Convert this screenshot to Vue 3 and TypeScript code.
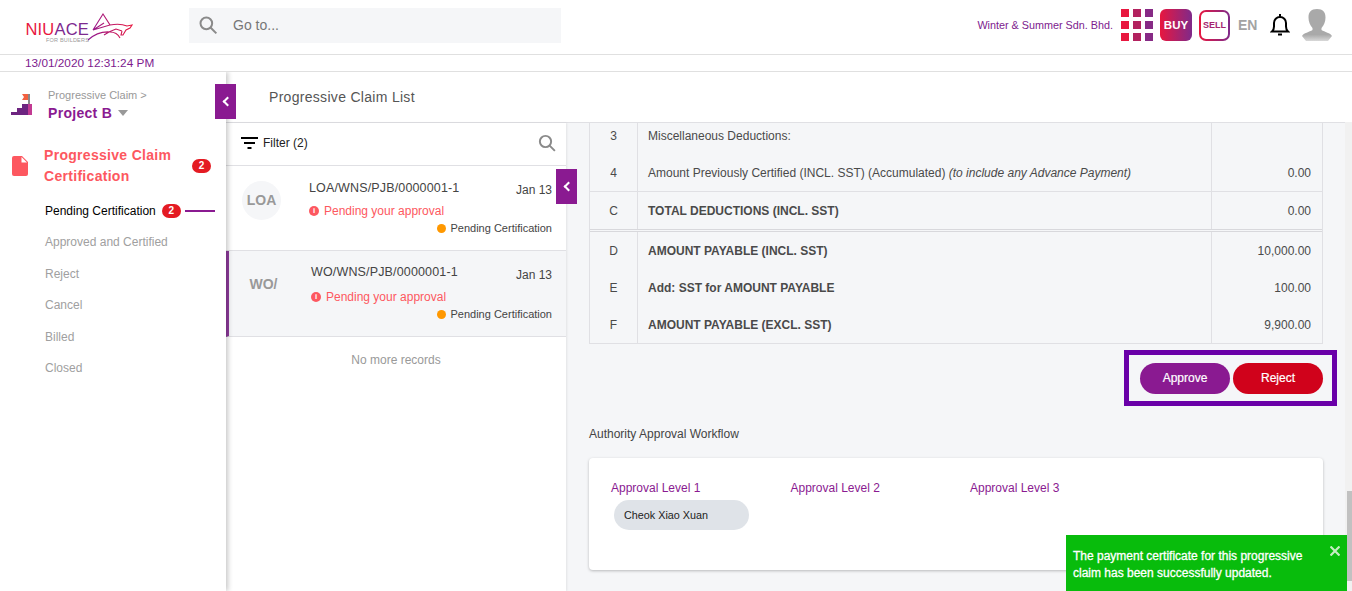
<script setup lang="ts">
interface ClaimCard {
  avatar: string;
  ref: string;
  active: boolean;
}

interface TableRow {
  no: string;
  label: string;
  note?: string;
  amount: string;
  bold?: boolean;
  rule?: 'single' | 'double';
}

const menuItems = ['Approved and Certified', 'Reject', 'Cancel', 'Billed', 'Closed'];

const claims: ClaimCard[] = [
  { avatar: 'LOA', ref: 'LOA/WNS/PJB/0000001-1', active: false },
  { avatar: 'WO/', ref: 'WO/WNS/PJB/0000001-1', active: true },
];

const rows: TableRow[] = [
  { no: '3', label: 'Miscellaneous Deductions:', amount: '' },
  {
    no: '4',
    label: 'Amount Previously Certified (INCL. SST) (Accumulated) ',
    note: '(to include any Advance Payment)',
    amount: '0.00',
    rule: 'single',
  },
  { no: 'C', label: 'TOTAL DEDUCTIONS (INCL. SST)', amount: '0.00', bold: true, rule: 'double' },
  { no: 'D', label: 'AMOUNT PAYABLE (INCL. SST)', amount: '10,000.00', bold: true },
  { no: 'E', label: 'Add: SST for AMOUNT PAYABLE', amount: '100.00', bold: true },
  { no: 'F', label: 'AMOUNT PAYABLE (EXCL. SST)', amount: '9,900.00', bold: true },
];

const levels = ['Approval Level 1', 'Approval Level 2', 'Approval Level 3'];
</script>

<template>
  <div class="page">
    <header class="topbar">
      <div class="logo">
        <div class="logo-text">
          <span class="logo-name"><span class="logo-niu">NIU</span>ACE</span>
          <span class="logo-sub">FOR BUILDERS</span>
        </div>
        <svg class="logo-bull" width="44" height="30" viewBox="0 0 44 30" fill="none">
          <defs>
            <linearGradient id="bull" x1="0" y1="0" x2="1" y2="0">
              <stop offset="0" stop-color="#8e1a94" />
              <stop offset="1" stop-color="#e8173f" />
            </linearGradient>
          </defs>
          <path
            d="M3 18 L13 2 L20 13 L3 18 L14 11 M20 13 Q30 11 37 14 L42 13 L40 16 L36 18 L33 23 L31 23 L32 19 M-2 28 Q8 19 20 20 Q27 20 30 26 M14 23 Q20 19 26 17 L32 19"
            stroke="url(#bull)"
            stroke-width="1.100"
          />
        </svg>
      </div>
      <div class="search">
        <svg width="20" height="20" viewBox="0 0 24 24" fill="none" stroke="#8a8a8a" stroke-width="2.400">
          <circle cx="10" cy="10" r="7" />
          <path d="M15 15l7 7" />
        </svg>
        <span>Go to...</span>
      </div>
      <div class="top-right">
        <span class="company">Winter &amp; Summer Sdn. Bhd.</span>
        <div class="apps">
          <i v-for="n in 9" :key="n" :class="'c' + ((n - 1) % 3)"></i>
        </div>
        <div class="buy">BUY</div>
        <div class="sell"><div class="sell-in">SELL</div></div>
        <span class="lang">EN</span>
        <svg class="bell" width="20" height="24" viewBox="0 0 20 24" fill="none" stroke="#000" stroke-width="2">
          <path d="M2 18.500h16c-1.400-1.200-2-2.600-2-5V10c0-3.400-2.600-6-6-6S4 6.600 4 10v3.500c0 2.400-.6 3.800-2 5z" />
          <path d="M10 1v3" />
          <path d="M8 21.500h4" />
        </svg>
        <svg class="avatar-pic" width="30" height="32" viewBox="0 0 30 32">
          <defs>
            <linearGradient id="bust" x1="0" y1="0" x2="0" y2="1">
              <stop offset="0.8" stop-color="#a9a9a9" />
              <stop offset="1" stop-color="#d8d8d8" />
            </linearGradient>
          </defs>
          <path
            fill="url(#bust)"
            d="M15 0c6 0 8.500 3 8.500 8.500 0 4-1.500 8-4 10.500v2c3 2 9 3 10.500 6l-4 5H4l-4-5c1.500-3 7.500-4 10.500-6v-2C8 16.500 6.500 12.500 6.500 8.500 6.500 3 9 0 15 0z"
          />
        </svg>
      </div>
    </header>

    <div class="datebar">13/01/2020 12:31:24 PM</div>

    <div class="body">
      <aside class="sidebar">
        <div class="project">
          <svg width="21" height="23" viewBox="0 0 21 23">
            <path fill="#f2603f" d="M11 1h7v6h-7l2-3z" />
            <rect x="17" y="1" width="2" height="10" fill="#888" />
            <path fill="#6d2480" d="M0 22v-3h6v-4h5v-4h6v11z" />
            <rect x="17" y="11" width="4" height="11" fill="#c23a92" />
          </svg>
          <div>
            <div class="crumb">Progressive Claim &gt;</div>
            <div class="project-name">Project B <span class="caret"></span></div>
          </div>
        </div>
        <div class="group">
          <svg class="doc" width="16" height="20" viewBox="0 0 16 20">
            <path fill="#fd5860" d="M2 0h8l6 6v12a2 2 0 0 1-2 2H2a2 2 0 0 1-2-2V2a2 2 0 0 1 2-2z" />
            <path fill="#fff" d="M9.500 1v5.500H15z" />
          </svg>
          <div class="group-title">Progressive Claim Certification</div>
          <span class="badge">2</span>
        </div>
        <div class="menu-active">
          <span>Pending Certification</span>
          <span class="badge">2</span>
          <i class="dash"></i>
        </div>
        <div v-for="item in menuItems" :key="item" class="menu-item">{{ item }}</div>
      </aside>

      <main class="content">
        <div class="titlebar">Progressive Claim List</div>
        <div class="columns">
          <section class="list">
            <div class="filter">
              <svg width="18" height="13" viewBox="0 0 18 13">
                <path fill="#000" d="M0 0h17v2H0zM3 5h11v2H3zM6.500 10h4v2h-4z" />
              </svg>
              <span class="filter-label">Filter (2)</span>
              <svg class="filter-search" width="18" height="18" viewBox="0 0 24 24" fill="none" stroke="#8a8a8a" stroke-width="2.600">
                <circle cx="10" cy="10" r="7.500" />
                <path d="M15.500 15.500l7 7" />
              </svg>
            </div>
            <div v-for="claim in claims" :key="claim.ref" class="claim" :class="{ active: claim.active }">
              <div class="claim-avatar">{{ claim.avatar }}</div>
              <div class="claim-main">
                <div class="claim-top">
                  <span class="claim-ref">{{ claim.ref }}</span>
                  <span class="claim-date">Jan 13</span>
                </div>
                <div class="claim-warn"><b>i</b>Pending your approval</div>
                <div class="claim-status"><i></i>Pending Certification</div>
              </div>
            </div>
            <div class="no-more">No more records</div>
          </section>

          <section class="detail">
            <div class="table">
              <div
                v-for="row in rows"
                :key="row.no"
                class="row"
                :class="row.rule"
              >
                <div class="cell-no">{{ row.no }}</div>
                <div class="cell-label" :class="{ bold: row.bold }">{{ row.label }}<em v-if="row.note">{{ row.note }}</em></div>
                <div class="cell-amount">{{ row.amount }}</div>
              </div>
            </div>
            <div class="actions-wrap">
              <div class="actions">
                <button class="btn approve">Approve</button>
                <button class="btn reject">Reject</button>
              </div>
            </div>
            <h4 class="wf-title">Authority Approval Workflow</h4>
            <div class="wf-card">
              <div class="wf-levels">
                <div v-for="level in levels" :key="level" class="wf-level">{{ level }}</div>
              </div>
              <div class="chip">Cheok Xiao Xuan</div>
            </div>
          </section>
        </div>
      </main>

      <button class="collapse first"><span></span></button>
      <button class="collapse second"><span></span></button>
    </div>

    <div class="scroll-track"><div class="scroll-thumb"></div></div>

    <div class="toast">
      <span>The payment certificate for this progressive claim has been successfully updated.</span>
      <svg class="toast-x" width="10" height="10" viewBox="0 0 10 10" stroke="#c6edc2" stroke-width="2.200">
        <path d="M0.500 0.500l9 9M9.500 0.500l-9 9" />
      </svg>
    </div>
  </div>
</template>

<style scoped>
* {
  box-sizing: border-box;
}

.page {
  position: relative;
  width: 1352px;
  height: 591px;
  overflow: hidden;
  background: #fff;
  font-family: "Liberation Sans", Arial, sans-serif;
  font-size: 12px;
  color: #333;
  display: flex;
  flex-direction: column;
}

.topbar {
  height: 55px;
  flex: none;
  display: flex;
  align-items: center;
  border-bottom: 1px solid #e0e0e0;
}

.logo {
  width: 189px;
  flex: none;
  display: flex;
  padding-left: 25px;
  align-items: flex-start;
  height: 100%;
}

.logo-text {
  width: 64px;
  flex: none;
  display: flex;
  flex-direction: column;
  align-items: flex-end;
  padding-top: 21px;
}

.logo-name {
  font-size: 16.500px;
  line-height: 16px;
  letter-spacing: 0.2px;
  white-space: nowrap;
  color: #7d2a8f;
}

.logo-niu {
  color: #e8173f;
}

.logo-sub {
  font-size: 5.500px;
  line-height: 6px;
  letter-spacing: 0.2px;
  white-space: nowrap;
  color: #999;
}

.logo-bull {
  margin: 12px 0 0 1px;
  overflow: visible;
}

.search {
  width: 372px;
  height: 35px;
  margin-top: -4px;
  background: #f5f6f8;
  display: flex;
  align-items: center;
  gap: 15px;
  padding-left: 9px;
  font-size: 14px;
  color: #777;
}

.top-right {
  margin-left: auto;
  display: flex;
  align-items: center;
  padding-right: 20px;
  margin-top: -4px;
}

.company {
  font-size: 10.800px;
  color: #7d1b8e;
  margin-right: 8px;
}

.apps {
  display: grid;
  grid-template-columns: repeat(3, 8px);
  grid-auto-rows: 8px;
  gap: 4px;
  width: 32px;
}

.apps i.c0 {
  background: #e8173f;
}

.apps i.c1 {
  background: #b3225f;
}

.apps i.c2 {
  background: #872a85;
}

.buy {
  width: 32px;
  height: 32px;
  margin-left: 7px;
  border-radius: 6px;
  background: linear-gradient(90deg, #e8173f, #7f2a8a);
  color: #fff;
  font-weight: 700;
  font-size: 11.500px;
  display: flex;
  align-items: center;
  justify-content: center;
}

.sell {
  width: 31px;
  height: 31px;
  margin-left: 7px;
  border-radius: 7px;
  padding: 2px;
  background: linear-gradient(90deg, #e8173f, #7f2a8a);
}

.sell-in {
  width: 100%;
  height: 100%;
  background: #fff;
  border-radius: 5px;
  display: flex;
  align-items: center;
  justify-content: center;
  font-size: 9px;
  font-weight: 700;
  color: #a5246f;
}

.lang {
  margin-left: 8px;
  width: 28px;
  font-size: 14px;
  font-weight: 700;
  color: #a3a3a3;
}

.bell {
  margin-left: 4px;
}

.avatar-pic {
  margin-left: 12px;
}

.datebar {
  height: 17px;
  flex: none;
  padding-left: 25px;
  border-bottom: 1px solid #e0e0e0;
  font-size: 11.800px;
  line-height: 16px;
  color: #7d1b8e;
}

.body {
  position: relative;
  flex: 1;
  display: flex;
  min-height: 0;
  overflow: hidden;
}

.sidebar {
  position: relative;
  z-index: 2;
  width: 226px;
  flex: none;
  background: #fff;
  box-shadow: 2px 0 5px rgba(0, 0, 0, 0.22);
}

.project {
  display: flex;
  gap: 16px;
  padding: 20px 0 0 11px;
  height: 59px;
}

.project > svg {
  margin-top: 1px;
}

.crumb {
  font-size: 11px;
  line-height: 12px;
  margin-top: -3px;
  color: #999;
}

.project-name {
  font-size: 14px;
  font-weight: 700;
  line-height: 16px;
  margin-top: 4px;
  letter-spacing: 0.3px;
  color: #8a1a91;
}

.caret {
  display: inline-block;
  margin-left: 2px;
  vertical-align: 2px;
  border: 5px solid transparent;
  border-top: 6px solid #999;
  border-bottom: 0;
}

.group {
  display: flex;
  align-items: center;
  padding: 14px 0 0 12px;
}

.doc {
  flex: none;
}

.group-title {
  width: 148px;
  margin-left: 16px;
  font-size: 14px;
  font-weight: 700;
  line-height: 21px;
  letter-spacing: 0.3px;
  color: #fd5860;
}

.badge {
  width: 19px;
  height: 14px;
  border-radius: 7px;
  background: #e41b23;
  color: #fff;
  font-size: 10px;
  font-weight: 700;
  line-height: 14px;
  text-align: center;
  flex: none;
}

.menu-active {
  display: flex;
  align-items: center;
  padding-left: 45px;
  margin-top: 13px;
  margin-bottom: 5px;
  height: 22px;
  color: #000;
}

.menu-active .badge {
  margin-left: 6px;
}

.dash {
  width: 30px;
  height: 2px;
  margin-left: 4px;
  background: #8a1a91;
}

.menu-item {
  padding-left: 45px;
  height: 31.500px;
  line-height: 31.500px;
  color: #a0a0a0;
}

.content {
  flex: 1;
  min-width: 0;
  display: flex;
  flex-direction: column;
}

.titlebar {
  height: 51px;
  flex: none;
  padding: 17px 0 0 43px;
  font-size: 14px;
  letter-spacing: 0.3px;
  color: #555;
  border-bottom: 1px solid #e0e0e4;
}

.columns {
  flex: 1;
  min-height: 0;
  display: flex;
}

.list {
  width: 340px;
  flex: none;
  background: #fff;
  box-shadow: 1px 0 2px rgba(0, 0, 0, 0.08);
  position: relative;
  z-index: 1;
}

.filter {
  height: 43px;
  display: flex;
  align-items: center;
  padding: 0 10px 2px 15px;
  border-bottom: 1px solid #e0e0e4;
  color: #222;
}

.filter-label {
  margin-left: 4px;
}

.filter-search {
  margin-left: auto;
}

.claim {
  height: 85px;
  display: flex;
  border-bottom: 1px solid #e0e0e4;
  padding: 14px 14px 0 16px;
}

.claim.active {
  height: 86px;
  background: #f5f6f8;
  border-left: 3px solid #8e3b9c;
  padding-left: 15px;
  padding-top: 13px;
}

.claim.active .claim-warn {
  margin-top: 7px;
}

.claim.active .claim-date {
  margin-top: 3px;
}

.claim-avatar {
  width: 39px;
  height: 39px;
  flex: none;
  margin-top: 1px;
  border-radius: 50%;
  background: #f5f6f8;
  color: #999;
  font-size: 14px;
  font-weight: 700;
  line-height: 39px;
  text-align: center;
}

.claim-main {
  flex: 1;
  margin-left: 28px;
  min-width: 0;
}

.claim-top {
  display: flex;
  justify-content: space-between;
  font-size: 12px;
  line-height: 16px;
  color: #444;
}

.claim-ref {
  font-size: 12.500px;
  letter-spacing: 0.15px;
}

.claim-date {
  margin-top: 2px;
}

.claim-warn {
  margin-top: 6px;
  line-height: 14px;
  color: #fd5860;
  display: flex;
  align-items: center;
  gap: 5px;
}

.claim-warn b {
  width: 10px;
  height: 10px;
  border-radius: 50%;
  background: #fd5860;
  color: #fff;
  font-size: 8px;
  line-height: 10px;
  text-align: center;
}

.claim-status {
  margin-top: 3px;
  display: flex;
  align-items: center;
  justify-content: flex-end;
  font-size: 11px;
  line-height: 14px;
  color: #444;
}

.claim-status i {
  width: 9px;
  height: 9px;
  border-radius: 50%;
  background: #ff9800;
  margin-right: 4px;
}

.no-more {
  padding-top: 16px;
  text-align: center;
  color: #999;
}

.detail {
  flex: 1;
  min-width: 0;
  background: #f5f6f8;
  padding: 0 29px 0 23px;
  overflow: hidden;
}

.table {
  margin-top: -7px;
  border: 1px solid #e0e0e4;
}

.row {
  display: grid;
  grid-template-columns: 48px 1fr 111px;
  height: 37px;
  align-items: stretch;
  color: #4a4a4a;
}

.row.single {
  border-bottom: 1px solid #e0e0e4;
  height: 38px;
}

.row.double {
  border-bottom: 3px double #d8d8dc;
  height: 40px;
}

.cell-no {
  border-right: 1px solid #e0e0e4;
  text-align: center;
  display: flex;
  align-items: center;
  justify-content: center;
}

.cell-label {
  padding-left: 10px;
  display: flex;
  align-items: center;
  white-space: pre-wrap;
}

.cell-label.bold {
  font-weight: 700;
}

.cell-label em {
  font-style: italic;
}

.cell-amount {
  border-left: 1px solid #e0e0e4;
  display: flex;
  align-items: center;
  justify-content: flex-end;
  padding-right: 11px;
}

.actions-wrap {
  display: flex;
  justify-content: flex-end;
  margin: 6px -14px 0 0;
}

.actions {
  width: 213px;
  height: 56px;
  border: 5px solid #6a00a8;
  display: flex;
  align-items: center;
  padding-left: 11px;
  gap: 3px;
}

.btn {
  width: 90px;
  height: 31px;
  border: 0;
  border-radius: 16px;
  color: #fff;
  font-family: inherit;
  font-size: 12px;
  -webkit-text-stroke: 0.2px #fff;
}

.approve {
  background: #8a1a91;
}

.reject {
  background: #d0021b;
}

.wf-title {
  margin: 21px 0 0;
  font-size: 12px;
  line-height: 14px;
  font-weight: 400;
  color: #444;
}

.wf-card {
  margin-top: 17px;
  height: 112px;
  background: #fff;
  border-radius: 4px;
  box-shadow: 0 1px 3px rgba(0, 0, 0, 0.25);
  padding: 23px 0 0 22px;
}

.wf-levels {
  display: flex;
}

.wf-level {
  width: 179.500px;
  line-height: 14px;
  color: #8a1a91;
}

.chip {
  width: 135px;
  height: 30px;
  margin: 5px 0 0 3px;
  border-radius: 15px;
  background: #dfe3e8;
  color: #222;
  font-size: 10.800px;
  line-height: 30px;
  padding-left: 10px;
}

.collapse {
  position: absolute;
  z-index: 3;
  width: 21px;
  height: 35px;
  padding: 0;
  border: 0;
  background: #8a1a91;
  display: flex;
  align-items: center;
  justify-content: center;
}

.collapse span {
  width: 7px;
  height: 7px;
  margin-left: 3px;
  border-left: 2.500px solid #fff;
  border-bottom: 2.500px solid #fff;
  transform: rotate(45deg);
}

.collapse.first {
  left: 215px;
  top: 12px;
}

.collapse.second {
  left: 556px;
  top: 97px;
}

.scroll-track {
  position: absolute;
  right: 0;
  top: 122px;
  bottom: 0;
  width: 7px;
  background: #f1f1f1;
}

.scroll-thumb {
  position: absolute;
  left: 2px;
  right: 0;
  top: 369px;
  height: 90px;
  background: #c1c1c1;
}

.toast {
  position: absolute;
  left: 1066px;
  top: 535px;
  width: 281px;
  height: 56px;
  z-index: 4;
  background: #08bc0c;
  color: #fff;
  font-size: 12px;
  line-height: 17px;
  -webkit-text-stroke: 0.3px #fff;
  padding: 13px 28px 0 7px;
}

.toast-x {
  position: absolute;
  top: 11px;
  right: 7px;
}
</style>
